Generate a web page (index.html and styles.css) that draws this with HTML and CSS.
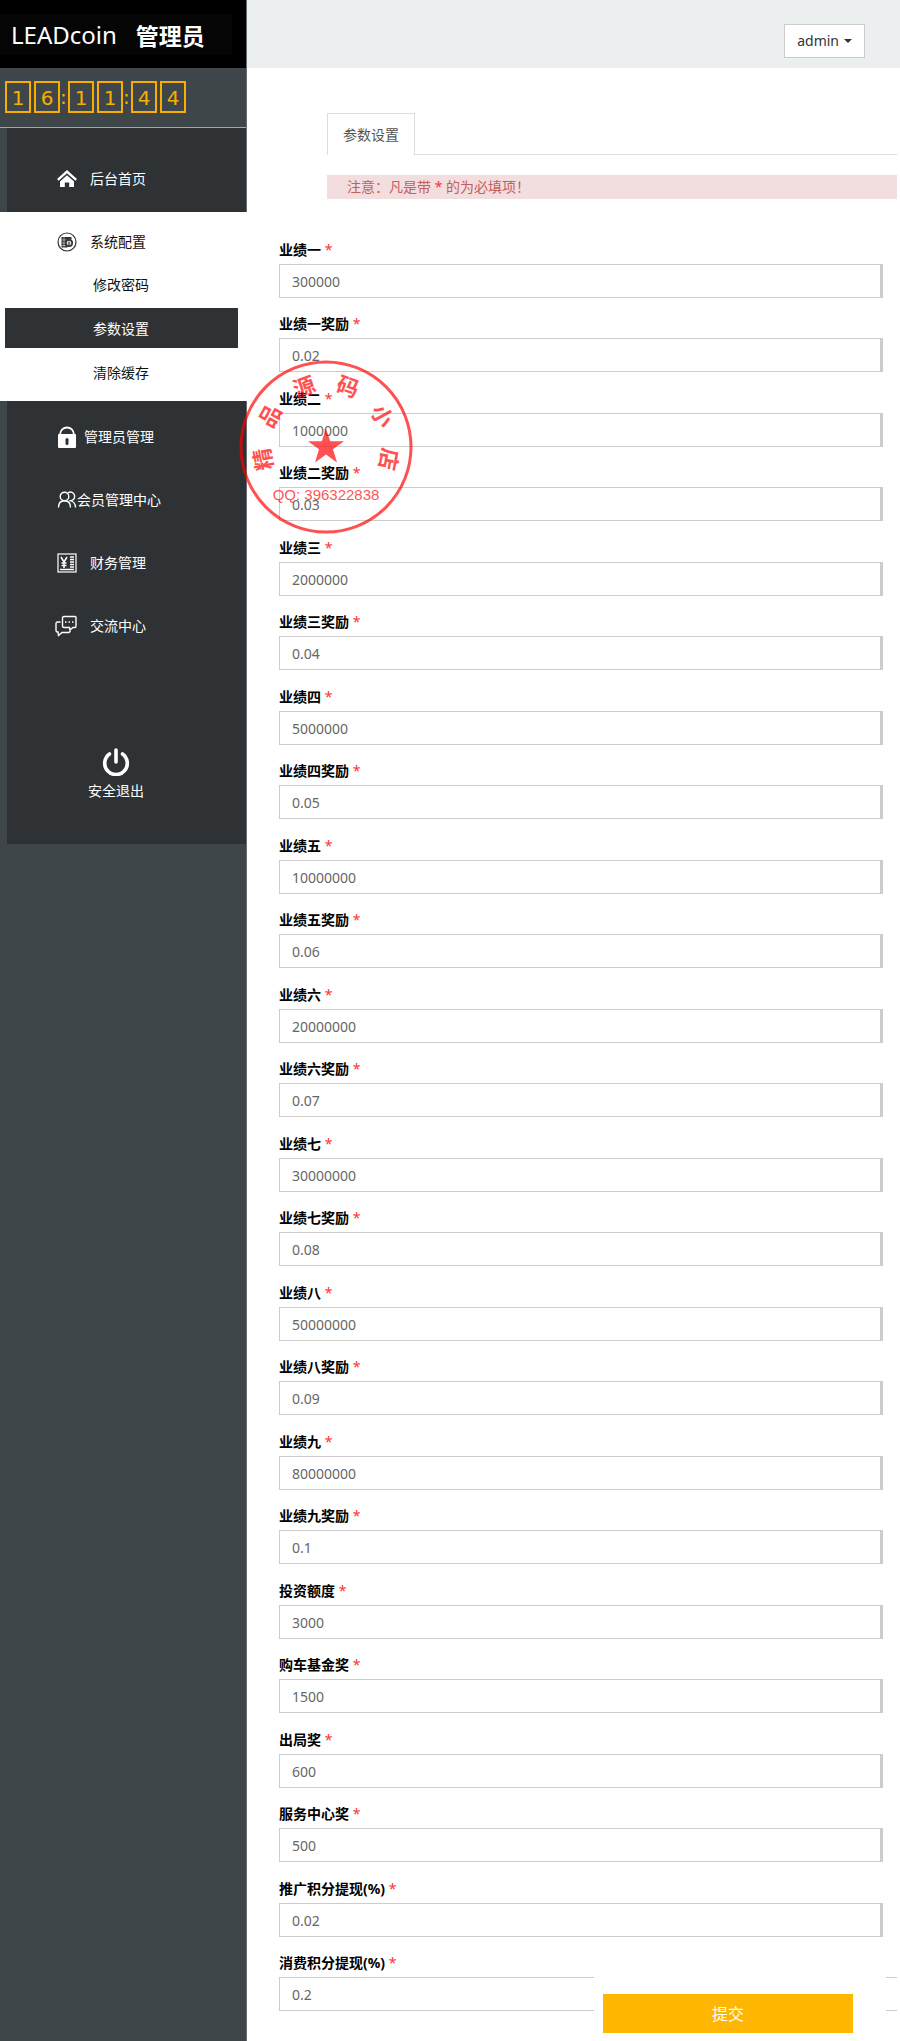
FILE: index.html
```
<!DOCTYPE html>
<html lang="zh-CN">
<head>
  <meta charset="UTF-8">
  <meta name="viewport" content="width=device-width, initial-scale=1.0">
  <title>LEADcoin 管理员</title>
  <link rel="stylesheet" href="styles.css">
</head>
<body>
  <div class="layout">

    <aside class="sidebar">
      <div class="brand">
        <div class="logo"><span class="logo-name">LEADcoin</span><span class="logo-role">管理员</span></div>
      </div>
      <div class="clock">
        <span class="digit">1</span><span class="digit">6</span><span class="colon">:</span><span class="digit">1</span><span class="digit">1</span><span class="colon">:</span><span class="digit">4</span><span class="digit">4</span>
      </div>

      <nav class="nav">
        <a class="nav-item" href="#">
          <svg class="icon" viewBox="0 0 20 20" fill="#fff"><path d="M10 1 0 10l1.600 1.700L10 4.200l8.400 7.500L20 10z"/><path d="M10 6.200 3 12.500V18h4.800v-4.500h4.400V18H17v-5.500z"/></svg>
          <span>后台首页</span>
        </a>
        <div class="nav-open">
          <a class="nav-head" href="#">
            <svg class="icon" viewBox="0 0 20 20" fill="none" stroke="#333"><circle cx="10" cy="10" r="9" stroke-width="1.200"/><path d="M4.500 5h10v2.500h-4v8h-6z" fill="#333" stroke="none"/><path d="M4.500 8h5M4.500 11h5M4.500 13.500h5M7 5v10" stroke="#ddd" stroke-width=".6"/><circle cx="12" cy="11" r="3.200" fill="#fff" stroke-width="1.700"/><path d="M11.300 9.500v3h1.400v-3" stroke-width=".8"/></svg>
            <span>系统配置</span>
          </a>
          <a class="sub" href="#">修改密码</a>
          <a class="sub active" href="#">参数设置</a>
          <a class="sub" href="#">清除缓存</a>
        </div>
        <a class="nav-item near" href="#">
          <svg class="icon lock" viewBox="0 0 20 24"><path d="M3 10C3 0 17 0 17 10" fill="none" stroke="#fff" stroke-width="1.800"/><rect x="1" y="9" width="18" height="14" rx="1" fill="#fff"/><rect x="8.500" y="13" width="3" height="7" rx="1.500" fill="#2e3235"/></svg>
          <span>管理员管理</span>
        </a>
        <a class="nav-item tight" href="#">
          <svg class="icon" viewBox="0 0 20 20" fill="none" stroke="#fff" stroke-width="1.400"><circle cx="7.500" cy="6.500" r="4.300"/><path d="M1.500 17.500c0-4 2-6.700 6-6.700s6 2.700 6 6.700"/><path d="M11 2.800a4.300 4.300 0 1 1 1.500 7.800c3.500.3 6 3 6 6.900"/></svg>
          <span>会员管理中心</span>
        </a>
        <a class="nav-item" href="#">
          <svg class="icon" viewBox="0 0 20 20" fill="none" stroke="#fff"><rect x="1" y="1" width="18" height="18" stroke-width="1.200"/><path d="M4 4l3 5 3-5M7 9v6M4.500 10h5M4.500 12.500h5" stroke-width="1.500"/><path d="M13 4h4M13 6.500h4M13 9h4M13 11.500h4M13 14h4M3 16.500h14" stroke-width="1.300"/></svg>
          <span>财务管理</span>
        </a>
        <a class="nav-item" href="#">
          <svg class="icon chat" viewBox="0 0 22 22" fill="none" stroke="#fff" stroke-width="1.400"><path d="M9 1.500h11q1 0 1 1v8q0 2-1 2h-2l-3 2.500-.5-2.500H9q-1.500 0-1.500-1.500V3q0-1.500 1.500-1.500z"/><path d="M5.500 7H2.500Q1 7 1 8.500v7Q1 17 2.500 17H3l.5 3.500L7 17.500h7l1.500-1.500"/><path d="M10 7h1.500M13.500 7H15M17 7h1.500" stroke-width="1.600"/></svg>
          <span>交流中心</span>
        </a>
        <a class="logout" href="#">
          <svg class="power" viewBox="0 0 28 28" fill="none" stroke="#fff" stroke-width="3.600" stroke-linecap="round"><path d="M7.500 6a11.300 11.300 0 1 0 13 0"/><path d="M14 2v12"/></svg>
          <span>安全退出</span>
        </a>
      </nav>
    </aside>

    <main class="main">
      <header class="topbar">
        <button class="user" type="button">admin<span class="caret"></span></button>
      </header>

      <div class="intro">
        <div class="tabs"><a class="tab" href="#">参数设置</a></div>
        <p class="notice">注意：凡是带 <b class="req">*</b> 的为必填项！</p>
      </div>

      <form class="form">
        <div class="field"><label for="f1">业绩一 <b class="req">*</b></label><input type="text" id="f1" value="300000"></div>
        <div class="field"><label for="f2">业绩一奖励 <b class="req">*</b></label><input type="text" id="f2" value="0.02"></div>
        <div class="field"><label for="f3">业绩二 <b class="req">*</b></label><input type="text" id="f3" value="1000000"></div>
        <div class="field"><label for="f4">业绩二奖励 <b class="req">*</b></label><input type="text" id="f4" value="0.03"></div>
        <div class="field"><label for="f5">业绩三 <b class="req">*</b></label><input type="text" id="f5" value="2000000"></div>
        <div class="field"><label for="f6">业绩三奖励 <b class="req">*</b></label><input type="text" id="f6" value="0.04"></div>
        <div class="field"><label for="f7">业绩四 <b class="req">*</b></label><input type="text" id="f7" value="5000000"></div>
        <div class="field"><label for="f8">业绩四奖励 <b class="req">*</b></label><input type="text" id="f8" value="0.05"></div>
        <div class="field"><label for="f9">业绩五 <b class="req">*</b></label><input type="text" id="f9" value="10000000"></div>
        <div class="field"><label for="f10">业绩五奖励 <b class="req">*</b></label><input type="text" id="f10" value="0.06"></div>
        <div class="field"><label for="f11">业绩六 <b class="req">*</b></label><input type="text" id="f11" value="20000000"></div>
        <div class="field"><label for="f12">业绩六奖励 <b class="req">*</b></label><input type="text" id="f12" value="0.07"></div>
        <div class="field"><label for="f13">业绩七 <b class="req">*</b></label><input type="text" id="f13" value="30000000"></div>
        <div class="field"><label for="f14">业绩七奖励 <b class="req">*</b></label><input type="text" id="f14" value="0.08"></div>
        <div class="field"><label for="f15">业绩八 <b class="req">*</b></label><input type="text" id="f15" value="50000000"></div>
        <div class="field"><label for="f16">业绩八奖励 <b class="req">*</b></label><input type="text" id="f16" value="0.09"></div>
        <div class="field"><label for="f17">业绩九 <b class="req">*</b></label><input type="text" id="f17" value="80000000"></div>
        <div class="field"><label for="f18">业绩九奖励 <b class="req">*</b></label><input type="text" id="f18" value="0.1"></div>
        <div class="field"><label for="f19">投资额度 <b class="req">*</b></label><input type="text" id="f19" value="3000"></div>
        <div class="field"><label for="f20">购车基金奖 <b class="req">*</b></label><input type="text" id="f20" value="1500"></div>
        <div class="field"><label for="f21">出局奖 <b class="req">*</b></label><input type="text" id="f21" value="600"></div>
        <div class="field"><label for="f22">服务中心奖 <b class="req">*</b></label><input type="text" id="f22" value="500"></div>
        <div class="field"><label for="f23">推广积分提现(%) <b class="req">*</b></label><input type="text" id="f23" value="0.02"></div>
        <div class="field wide"><label for="f24">消费积分提现(%) <b class="req">*</b></label><input type="text" id="f24" value="0.2"></div>
        <div class="submit-bar"><button class="submit" type="submit">提交</button></div>
      </form>
    </main>

    <!-- round seal lying over the form -->
    <svg class="seal" viewBox="-88 -88 176 176">
      <circle r="85" fill="none" stroke="#f00" stroke-width="3"/>
      <path d="M0-18.500 4.200-5.800H18L7 2.200l4 13.300L0 7.500-11 15.500-7 2.200-18-5.800H-4.200z" fill="#f00"/>
      <g class="seal-arc">
        <text y="-56" transform="rotate(-101)">精</text>
        <text y="-56" transform="rotate(-61)">品</text>
        <text y="-56" transform="rotate(-20)">源</text>
        <text y="-56" transform="rotate(20)">码</text>
        <text y="-56" transform="rotate(61)">小</text>
        <text y="-56" transform="rotate(101)">店</text>
      </g>
      <text class="seal-qq" y="53">QQ: 396322838</text>
    </svg>
  </div>
</body>
</html>
```

FILE: styles.css
```
* {
  box-sizing: border-box;
}

body {
  margin: 0;
  font-family: "Noto Sans", "Noto Sans CJK SC", sans-serif;
  font-size: 14px;
  line-height: 20px;
  color: #000;
  background-color: #fff;
}

a {
  color: inherit;
  text-decoration: none;
}

.layout {
  position: relative;
  display: flex;
  min-height: 100vh;
}

/* sidebar */
.sidebar {
  flex: 0 0 247px;
  background-color: #3e4649;
  color: #fff;
  border-right: 1px solid #676d70;
}

.brand {
  height: 68px;
  padding-top: 14px;
  background-color: #000;
}

.logo {
  display: flex;
  align-items: center;
  width: 232px;
  height: 41px;
  padding-left: 11px;
  background-color: #050505;
}

.logo-name {
  font-size: 24px;
}

.logo-role {
  margin-left: 19px;
  font-family: "Noto Sans CJK SC", sans-serif;
  font-size: 23px;
  font-weight: bold;
}

.clock {
  display: flex;
  height: 60px;
  padding: 13px 5px;
  border-bottom: 1px solid #a5a8aa;
  color: #f8ae00;
  font-family: "DejaVu Sans", sans-serif;
  font-size: 20px;
}

.digit {
  width: 26px;
  height: 32px;
  border: 2px solid #f8ae00;
  line-height: 30px;
  text-align: center;
}

.digit + .digit {
  margin-left: 3px;
}

.colon {
  width: 8px;
  line-height: 32px;
}

.nav {
  height: 716px;
  padding-top: 19px;
  border-left: 7px solid #3e4649;
  background-color: #2e3235;
}

.nav-item,
.nav-head {
  display: flex;
  align-items: center;
  gap: 13px;
  height: 63px;
  padding-left: 50px;
}

.nav-item.near {
  gap: 7px;
}

.nav-item.tight {
  gap: 0;
}

.icon {
  flex: none;
  width: 20px;
  height: 20px;
}

.icon.lock {
  height: 24px;
}

.icon.chat {
  width: 22px;
  height: 22px;
  margin-left: -2px;
}

.nav-open {
  margin: 2px -1px 4px -7px;
  padding-bottom: 5px;
  background-color: #fff;
  color: #111;
}

.nav-head {
  height: 52px;
  padding: 8px 0 0 57px;
}

.sub {
  display: block;
  height: 40px;
  margin: 0 9px 4px 5px;
  padding-left: 88px;
  line-height: 42px;
}

.sub.active {
  background-color: #2e3235;
  color: #fff;
}

.logout {
  display: flex;
  flex-direction: column;
  align-items: center;
  gap: 5px;
  width: 116px;
  margin: 91px 0 0 51px;
}

.power {
  width: 28px;
  height: 28px;
}

/* content */
.main {
  flex: 1;
  min-width: 0;
}

.topbar {
  display: flex;
  justify-content: flex-end;
  align-items: flex-end;
  height: 68px;
  padding: 0 35px 10px 0;
  background-color: #ebeff0;
}

.user {
  display: flex;
  align-items: center;
  gap: 5px;
  height: 34px;
  padding: 0 12px;
  border: 1px solid #ccc;
  background-color: #fff;
  color: #333;
  font: inherit;
}

.caret {
  border: 4px solid transparent;
  border-top-color: #333;
  border-bottom: 0;
}

.intro {
  padding: 45px 3px 0 80px;
}

.tabs {
  display: flex;
  border-bottom: 1px solid #ddd;
}

.tab {
  height: 42px;
  margin-bottom: -1px;
  padding: 11px 15px;
  border: 1px solid #ddd;
  border-bottom: 0;
  background-color: #fff;
  color: #555;
}

.notice {
  height: 24px;
  margin: 20px 0 0;
  padding: 2px 20px;
  background-color: #f2dede;
  color: #c4605c;
}

.req {
  color: #f33;
  font-weight: normal;
}

.form {
  position: relative;
  padding: 41px 3px 30px 32px;
}

.field {
  display: flex;
  flex-direction: column;
  gap: 4px;
  margin: 0 14px 16px 0;
}

.field:nth-child(even) {
  margin-bottom: 17px;
}

.field.wide {
  margin: 0;
}

.field label {
  font-weight: bold;
}

.field input {
  width: 100%;
  height: 34px;
  padding: 0 12px;
  border: 1px solid #ccc;
  border-right-width: 3px;
  background-color: #fff;
  color: #666;
  font: inherit;
}

.field.wide input {
  border-right: 0;
}

/* stays over the last row of the form */
.submit-bar {
  position: absolute;
  right: 14px;
  bottom: 0;
  width: 292px;
  padding: 18px 33px 8px 9px;
  background-color: #fff;
}

.submit {
  display: block;
  width: 100%;
  height: 39px;
  border: 0;
  background-color: #ffb600;
  color: #fff;
  font: inherit;
  font-size: 16px;
}

/* seal */
.seal {
  position: absolute;
  top: 359px;
  left: 238px;
  width: 176px;
  height: 176px;
  opacity: 0.68;
  pointer-events: none;
}

.seal text {
  fill: #f00;
  text-anchor: middle;
}

.seal-arc {
  font-size: 22px;
  font-weight: bold;
}

.seal-qq {
  font-family: "Liberation Sans", sans-serif;
  font-size: 15px;
}
```
